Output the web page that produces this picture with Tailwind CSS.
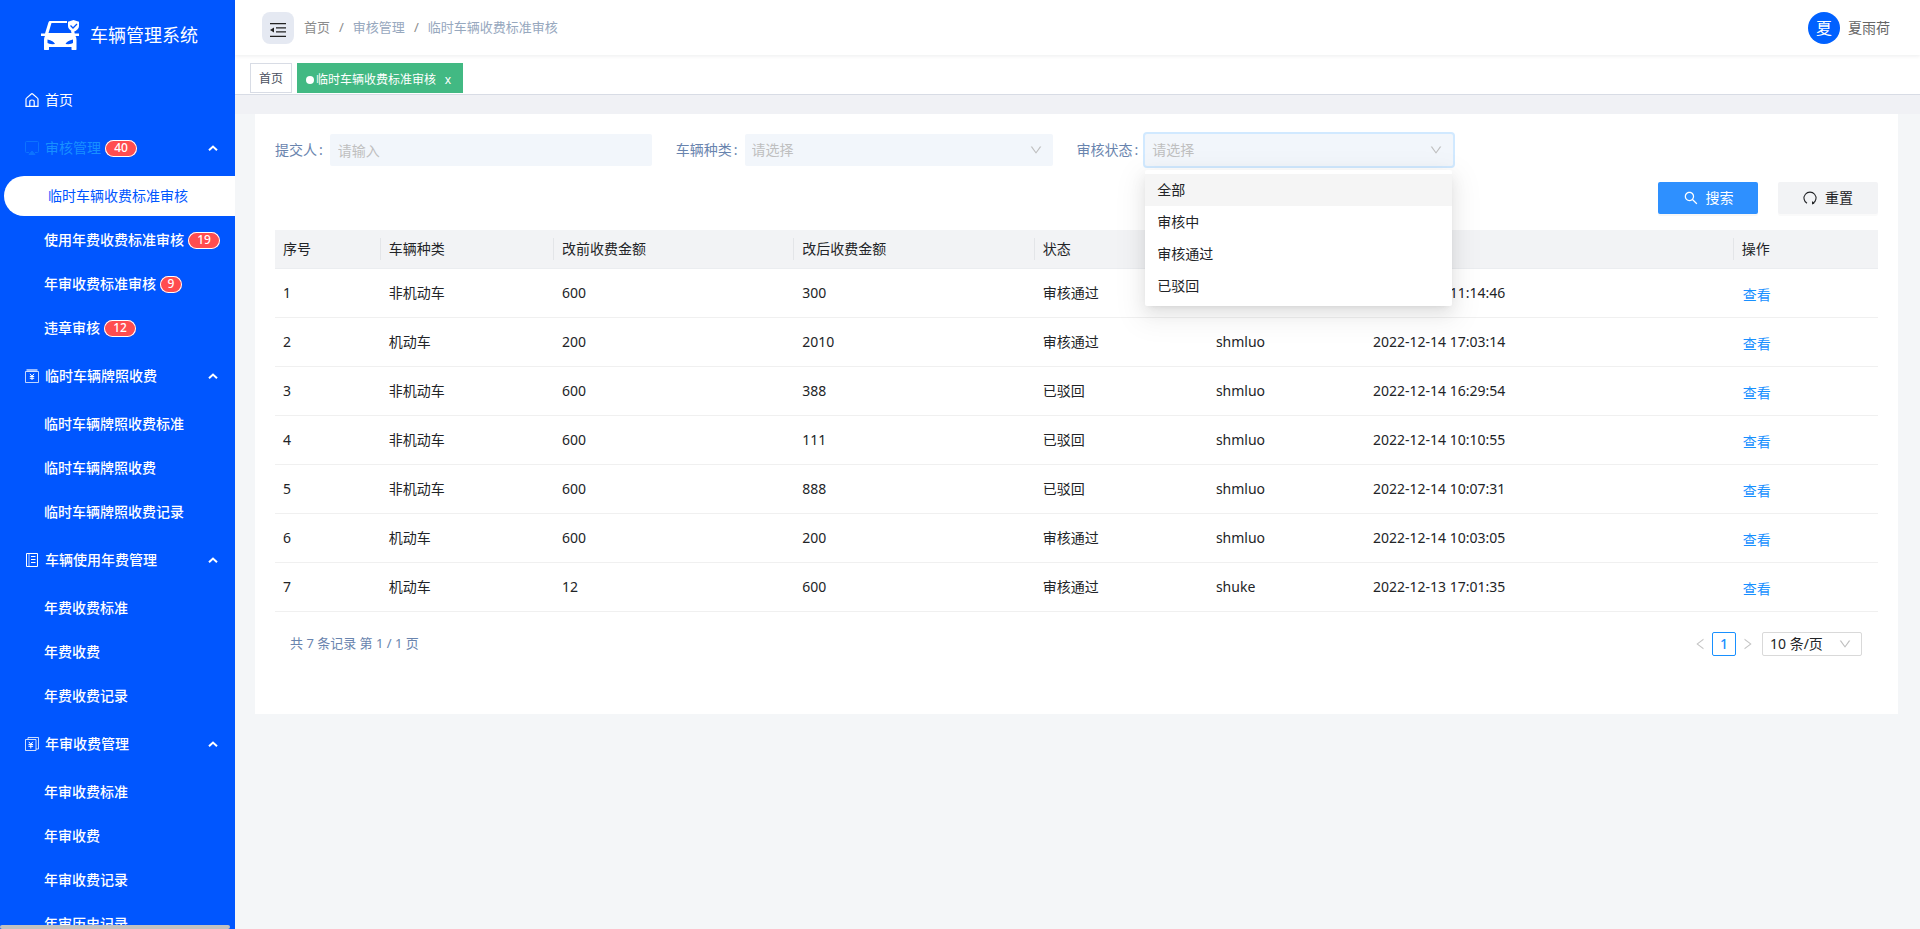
<!DOCTYPE html>
<html lang="zh-CN">
<head>
<meta charset="utf-8">
<meta name="viewport" content="width=device-width, initial-scale=1">
<title>车辆管理系统</title>
<script src="https://cdn.jsdelivr.net/npm/@tailwindcss/browser@4"></script>
</head>
<body class="flex h-screen overflow-hidden bg-[#f4f6f8] font-['Noto_Sans','Noto_Sans_CJK_SC',sans-serif] text-sm text-[#222427]">

<svg class="hidden">
  <symbol id="down" viewBox="0 0 1024 1024"><path fill="currentColor" d="M884 256h-75c-5.1 0-9.9 2.500-12.900 6.600L512 654.200 227.900 262.600c-3-4.100-7.800-6.600-12.900-6.600h-75c-6.500 0-10.300 7.400-6.500 12.700l352.600 486.100c12.800 17.600 39 17.600 51.700 0l352.600-486.100c3.900-5.300.1-12.700-6.400-12.700z"/></symbol>
  <symbol id="caret" viewBox="0 0 10 6"><path fill="none" stroke="currentColor" stroke-width="2" d="M1 5.200 5 1.500 9 5.200"/></symbol>
</svg>

<aside class="relative h-screen w-[235px] shrink-0 overflow-hidden bg-[#0056ff] text-white">
  <div class="flex h-[76px] items-start gap-[11px] pt-[18px] pl-10">
    <svg class="h-8 w-[39px]" viewBox="0 0 39 32" fill="#fff">
      <path fill-rule="evenodd" d="M10 3H27V5H11.500L8.500 15H31.500L31 13H34L34.800 15.500H39V18H35.500Q36.500 19.500 36.500 22V31Q36.500 32.500 35 32.500H33Q31.500 32.500 31.500 31V29H9V31Q9 32.500 7.500 32.500H5.500Q4 32.500 4 31V22Q4 19.500 5 18H1V15.500H5L8.500 4.200Q9 3 10 3ZM7.500 21.500V25Q9 26.500 15 26Q13.500 22.500 7.500 21.500ZM33 21.500V25Q31.500 26.500 25.500 26Q27 22.500 33 21.500Z"/>
      <path d="M33.500 2 39 3.800V8Q39 11.500 33.500 14 28 11.500 28 8V3.800Z"/>
      <path d="m30.500 7.500 2.500 2.500 4-4" fill="none" stroke="#0056ff" stroke-width="1.300"/>
    </svg>
    <h1 class="text-lg leading-[34px]">车辆管理系统</h1>
  </div>
  <nav>
    <a href="#" class="flex h-12 items-center gap-1.5 pl-[25px]">
      <svg class="size-[14px]" viewBox="0 0 14 14" fill="none" stroke="currentColor" stroke-width="1.200"><path d="M1 6.200Q1 5.500 1.500 5.100L6.300 1Q7 .4 7.700 1L12.500 5.100Q13 5.500 13 6.200V13.400H1ZM4.800 13.400V8.500Q4.800 7 7 7T9.200 8.500V13.400"/></svg>首页
    </a>

    <button type="button" class="flex h-12 w-full items-center gap-1.5 pr-[17px] pl-[25px] text-[#1890ff]">
      <svg class="size-[14px] opacity-50" viewBox="0 0 14 14" fill="none" stroke="currentColor"><path d="M4 11.500H1.500Q.5 11.500 .5 10.500V1.500Q.5 .5 1.500 .5H12.500Q13.500 .5 13.500 1.500V10.500Q13.500 11.500 12.500 11.500H10"/><path fill="currentColor" d="M4 13.500 7 10 10 13.500Z"/></svg>审核管理
      <span class="-ml-0.5 flex h-[17px] w-8 items-center justify-center rounded-full bg-[#ff4d4f] text-xs font-medium text-white ring-1 ring-white ring-inset">40</span>
      <svg class="ml-auto h-[6px] w-[10px] text-white"><use href="#caret"/></svg>
    </button>
    <ul class="flex flex-col gap-1 py-1 font-medium">
      <li><a href="#" class="ml-1 flex h-10 items-center rounded-l-full bg-white pl-11 font-normal text-[#0056ff]">临时车辆收费标准审核</a></li>
      <li><a href="#" class="flex h-10 items-center gap-1 pl-11">使用年费收费标准审核<span class="flex h-[17px] w-8 items-center justify-center rounded-full bg-[#ff4d4f] text-xs ring-1 ring-white ring-inset">19</span></a></li>
      <li><a href="#" class="flex h-10 items-center gap-1 pl-11">年审收费标准审核<span class="flex h-[17px] w-[22px] items-center justify-center rounded-full bg-[#ff4d4f] text-xs ring-1 ring-white ring-inset">9</span></a></li>
      <li><a href="#" class="flex h-10 items-center gap-1 pl-11">违章审核<span class="flex h-[17px] w-8 items-center justify-center rounded-full bg-[#ff4d4f] text-xs ring-1 ring-white ring-inset">12</span></a></li>
    </ul>

    <button type="button" class="flex h-12 w-full items-center gap-1.5 pr-[17px] pl-[25px] font-medium">
      <svg class="size-[14px]" viewBox="0 0 14 14" fill="none" stroke="#fff"><path fill="#fff" stroke="none" opacity=".6" d="M1.500 0H12.500V2.500H1.500Z"/><path opacity=".75" d="M.5 2.500H13.500V13.500H.5Z"/><path d="M5 4.800 7 7.300 9 4.800M7 7V11M4.800 7.500H9.200M4.800 9.300H9.200"/></svg>临时车辆牌照收费
      <svg class="ml-auto h-[6px] w-[10px]"><use href="#caret"/></svg>
    </button>
    <ul class="flex flex-col gap-1 py-1 font-medium">
      <li><a href="#" class="flex h-10 items-center pl-11">临时车辆牌照收费标准</a></li>
      <li><a href="#" class="flex h-10 items-center pl-11">临时车辆牌照收费</a></li>
      <li><a href="#" class="flex h-10 items-center pl-11">临时车辆牌照收费记录</a></li>
    </ul>

    <button type="button" class="flex h-12 w-full items-center gap-1.5 pr-[17px] pl-[25px] font-medium">
      <svg class="size-[14px]" viewBox="0 0 14 14" fill="none" stroke="#fff"><path d="M1.500 .5H12.500V13.500H1.500Z"/><path opacity=".7" d="M4 1V13"/><path d="M6 3.500H10.500M6 6.500H10.500M6 9.500H10.500"/></svg>车辆使用年费管理
      <svg class="ml-auto h-[6px] w-[10px]"><use href="#caret"/></svg>
    </button>
    <ul class="flex flex-col gap-1 py-1 font-medium">
      <li><a href="#" class="flex h-10 items-center pl-11">年费收费标准</a></li>
      <li><a href="#" class="flex h-10 items-center pl-11">年费收费</a></li>
      <li><a href="#" class="flex h-10 items-center pl-11">年费收费记录</a></li>
    </ul>

    <button type="button" class="flex h-12 w-full items-center gap-1.5 pr-[17px] pl-[25px] font-medium">
      <svg class="size-[14px]" viewBox="0 0 14 14" fill="none" stroke="#fff"><path opacity=".8" d="M.5 2.500H11V13.500H.5ZM3 2.500V.5H13.500V12H11"/><path d="M3.800 4.800 5.800 7.300 7.800 4.800M5.800 7V11.500M3.500 7.500H8.100M3.500 9.300H8.100"/></svg>年审收费管理
      <svg class="ml-auto h-[6px] w-[10px]"><use href="#caret"/></svg>
    </button>
    <ul class="flex flex-col gap-1 py-1 font-medium">
      <li><a href="#" class="flex h-10 items-center pl-11">年审收费标准</a></li>
      <li><a href="#" class="flex h-10 items-center pl-11">年审收费</a></li>
      <li><a href="#" class="flex h-10 items-center pl-11">年审收费记录</a></li>
      <li><a href="#" class="flex h-10 items-center pl-11">年审历史记录</a></li>
    </ul>
  </nav>
  <div class="absolute bottom-0 left-0 h-1 w-[230px] rounded-sm bg-[#c1c1c1]"></div>
</aside>

<div class="flex min-w-0 flex-1 flex-col">
  <header class="relative flex h-[55px] shrink-0 items-center bg-white pr-[30px] pl-[27px] shadow-[0_1px_4px_rgba(0,21,41,0.08)]">
    <button type="button" aria-label="收起菜单" class="flex size-8 items-center justify-center rounded-lg bg-[#e5e9f2]">
      <svg class="mt-1 h-[14px] w-4" viewBox="0 0 16 14"><path stroke="#222" stroke-width="1.200" d="M0 .6H16M6 4.800H16M6 8.800H16M0 13.300H16"/><path fill="#222" d="M4 4.500V9.500L0 7Z"/></svg>
    </button>
    <nav class="ml-2.5 flex items-center gap-[9px] pb-0.5 text-[13px] leading-5 text-[#97a8be]">
      <a href="#" class="text-[#8c8c8c]">首页</a><span class="text-[#8c8c8c]">/</span><span>审核管理</span><span class="text-[#8c8c8c]">/</span><span>临时车辆收费标准审核</span>
    </nav>
    <div class="ml-auto flex items-center gap-2 text-[#666]">
      <span class="flex size-8 items-center justify-center rounded-full bg-[#0061ff] text-base text-white">夏</span>夏雨荷
    </div>
  </header>
  <div class="flex h-[40px] shrink-0 items-start gap-[5px] border-b border-[#d8dce5] bg-white pt-2 pl-[15px] text-xs shadow-[0_1px_3px_0_rgba(0,0,0,0.12)]">
    <a href="#" class="flex h-[30px] items-center border border-[#d8dce5] px-2 pt-0.5 text-[#495060]">首页</a>
    <span class="flex h-[30px] items-center bg-[#42b983] pt-[3px] pr-[3px] pl-[9px] text-white"><i class="mr-0.5 size-2 rounded-full bg-white"></i>临时车辆收费标准审核<button type="button" aria-label="关闭标签" class="w-6 text-center">x</button></span>
  </div>
  <div class="h-[19px] shrink-0 bg-[#f0f1f5]"></div>

  <main class="mr-[22px] ml-5 bg-white px-5 pt-5 pb-[58px]">
    <form class="mb-4">
      <div class="grid grid-cols-4 text-[#6984ae]">
        <div class="flex h-8 items-center pr-6">
          <label for="submitter">提交人<span class="ml-0.5">:</span></label>
          <input id="submitter" type="text" placeholder="请输入" class="ml-[7px] h-8 min-w-0 flex-1 rounded-xs bg-[#f2f6fb] px-2 outline-none placeholder:text-[#bfbfbf]">
        </div>
        <div class="flex h-8 items-center pr-6">
          <label for="kind">车辆种类<span class="ml-0.5">:</span></label>
          <div class="relative ml-[7px] min-w-0 flex-1">
            <select id="kind" class="block h-8 w-full appearance-none rounded-xs bg-[#f2f6fb] px-[7px] text-[#bfbfbf]"><option>请选择</option><option>机动车</option><option>非机动车</option></select>
            <svg class="pointer-events-none absolute top-[9px] right-[10px] size-[14px] text-[#bfbfbf]"><use href="#down"/></svg>
          </div>
        </div>
        <div class="flex h-8 items-center pr-6">
          <label for="status">审核状态<span class="ml-0.5">:</span></label>
          <div class="relative ml-[7px] min-w-0 flex-1">
            <select id="status" class="block h-8 w-full appearance-none rounded-xs bg-[#f2f6fb] px-[7px] text-[#bfbfbf] ring-2 ring-[#d1e9ff]"><option>请选择</option><option>全部</option><option>审核中</option><option>审核通过</option><option>已驳回</option></select>
            <svg class="pointer-events-none absolute top-[9px] right-[10px] size-[14px] text-[#bfbfbf]"><use href="#down"/></svg>
            <ul role="listbox" aria-label="审核状态" class="absolute top-9 right-px left-0 z-10 rounded-xs bg-white py-1 leading-8 text-[#222427] shadow-[0_3px_6px_-4px_rgba(0,0,0,0.12),0_6px_16px_0_rgba(0,0,0,0.08),0_9px_28px_8px_rgba(0,0,0,0.05)]">
              <li role="option" class="bg-[#f5f5f5] px-3">全部</li>
              <li role="option" class="px-3">审核中</li>
              <li role="option" class="px-3">审核通过</li>
              <li role="option" class="px-3">已驳回</li>
            </ul>
          </div>
        </div>
      </div>
      <div class="mt-4 flex justify-end gap-5">
        <button type="submit" class="flex h-8 w-[100px] items-center justify-center gap-[7px] rounded-xs bg-[#2e90ff] text-white shadow-[0_2px_0_rgba(0,0,0,0.03)]">
          <svg class="size-4" viewBox="0 0 1024 1024" fill="currentColor"><path d="M909.600 854.500L649.900 594.800C690.200 542.700 712 479 712 412c0-80.200-31.300-155.400-87.900-212.100-56.600-56.700-132-87.900-212.100-87.900s-155.500 31.300-212.100 87.900C143.200 256.500 112 331.800 112 412c0 80.100 31.300 155.500 87.900 212.100C256.500 680.800 331.800 712 412 712c67 0 130.600-21.800 182.700-62l259.700 259.600a8.200 8.200 0 0 0 11.600 0l43.600-43.500a8.200 8.200 0 0 0 0-11.600zM570.400 570.400C528 612.700 471.800 636 412 636s-116-23.300-158.400-65.600C211.300 528 188 471.800 188 412s23.300-116.100 65.600-158.400C296 211.300 352.200 188 412 188s116.100 23.200 158.400 65.600S636 352.200 636 412s-23.300 116.100-65.600 158.400z"/></svg>搜索
        </button>
        <button type="reset" class="flex h-8 w-[100px] items-center justify-center gap-2 rounded-xs bg-[#f2f3f5] shadow-[0_2px_0_rgba(0,0,0,0.02)]">
          <svg class="size-[14px]" viewBox="0 0 14 14" fill="none" stroke="currentColor" stroke-width="1.100"><path d="M4 12.300A6 6 0 1 1 10 12.300"/><path fill="currentColor" stroke="none" d="M9 10 11.500 12.500 9 13.500Z"/></svg>重置
        </button>
      </div>
    </form>

    <table class="w-full table-fixed text-left">
      <colgroup><col class="w-[6.6%]"><col class="w-[10.8%]"><col class="w-[15%]"><col class="w-[15%]"><col class="w-[10.8%]"><col class="w-[9.800%]"><col class="w-[23%]"><col class="w-[9%]"></colgroup>
      <thead class="bg-[#f2f3f5]">
        <tr class="h-[38px] border-b border-[#ebedf0] [&>th]:bg-[linear-gradient(#e3e5e8,#e3e5e8)] [&>th]:bg-[length:1px_22px] [&>th]:bg-right [&>th]:bg-no-repeat [&>th]:px-2 [&>th]:font-normal [&>th:last-child]:bg-none">
          <th>序号</th><th>车辆种类</th><th>改前收费金额</th><th>改后收费金额</th><th>状态</th><th>提交人</th><th>提交时间</th><th>操作</th>
        </tr>
      </thead>
      <tbody class="[&>tr]:h-[49px] [&>tr]:border-b [&>tr]:border-[#f0f0f0] [&_a]:text-[#1890ff] [&_td]:px-2 [&_td:last-child]:pt-1 [&_td:last-child]:pl-[9px]">
        <tr><td>1</td><td>非机动车</td><td>600</td><td>300</td><td>审核通过</td><td>shmluo</td><td>2022-12-15 11:14:46</td><td><a href="#">查看</a></td></tr>
        <tr><td>2</td><td>机动车</td><td>200</td><td>2010</td><td>审核通过</td><td>shmluo</td><td>2022-12-14 17:03:14</td><td><a href="#">查看</a></td></tr>
        <tr><td>3</td><td>非机动车</td><td>600</td><td>388</td><td>已驳回</td><td>shmluo</td><td>2022-12-14 16:29:54</td><td><a href="#">查看</a></td></tr>
        <tr><td>4</td><td>非机动车</td><td>600</td><td>111</td><td>已驳回</td><td>shmluo</td><td>2022-12-14 10:10:55</td><td><a href="#">查看</a></td></tr>
        <tr><td>5</td><td>非机动车</td><td>600</td><td>888</td><td>已驳回</td><td>shmluo</td><td>2022-12-14 10:07:31</td><td><a href="#">查看</a></td></tr>
        <tr><td>6</td><td>机动车</td><td>600</td><td>200</td><td>审核通过</td><td>shmluo</td><td>2022-12-14 10:03:05</td><td><a href="#">查看</a></td></tr>
        <tr><td>7</td><td>机动车</td><td>12</td><td>600</td><td>审核通过</td><td>shuke</td><td>2022-12-13 17:01:35</td><td><a href="#">查看</a></td></tr>
      </tbody>
    </table>

    <div class="mt-5 flex h-6 items-center pr-4 pl-[15px]">
      <p class="text-[13px] text-[#6984ae]">共 7 条记录 第 1 / 1 页</p>
      <button type="button" aria-label="上一页" disabled class="ml-auto flex size-6 items-center justify-center text-[#c4c4c4]"><svg class="size-[14px] rotate-90"><use href="#down"/></svg></button>
      <button type="button" class="size-6 rounded-xs border border-[#1890ff] font-medium leading-[22px] text-[#1890ff]">1</button>
      <button type="button" aria-label="下一页" disabled class="flex size-6 items-center justify-center text-[#c4c4c4]"><svg class="size-[14px] -rotate-90"><use href="#down"/></svg></button>
      <div class="relative ml-0.5">
        <select aria-label="每页条数" class="block h-6 w-[100px] appearance-none rounded-xs border border-[#d9d9d9] bg-white px-[7px]"><option>10 条/页</option><option>20 条/页</option></select>
        <svg class="pointer-events-none absolute top-[5px] right-[10px] size-[14px] text-[#bfbfbf]"><use href="#down"/></svg>
      </div>
    </div>
  </main>
</div>
</body>
</html>
